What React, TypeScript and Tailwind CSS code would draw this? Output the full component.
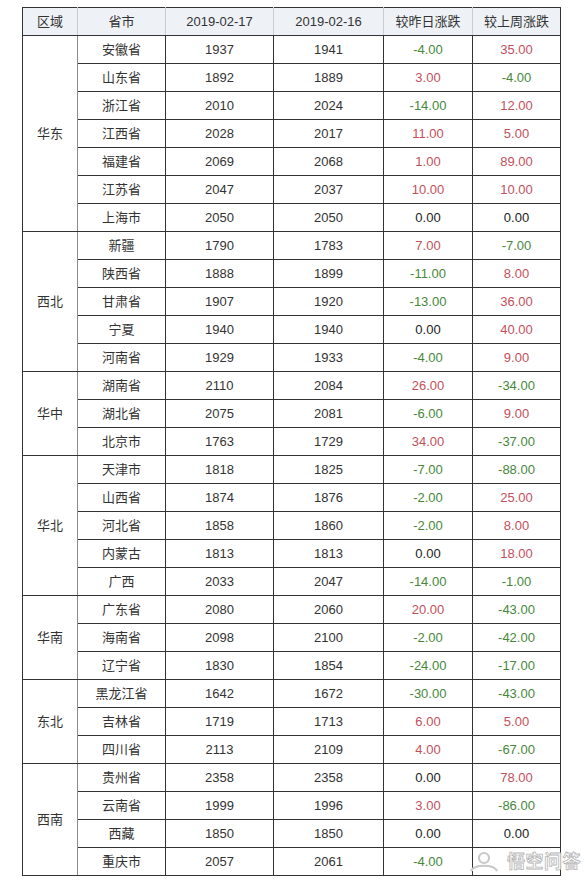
import { Fragment } from "react";

type Row = [string, string, string, string, string];

const groups: { region: string; rows: Row[] }[] = [
  {
    region: "华东",
    rows: [
      ["安徽省", "1937", "1941", "-4.00", "35.00"],
      ["山东省", "1892", "1889", "3.00", "-4.00"],
      ["浙江省", "2010", "2024", "-14.00", "12.00"],
      ["江西省", "2028", "2017", "11.00", "5.00"],
      ["福建省", "2069", "2068", "1.00", "89.00"],
      ["江苏省", "2047", "2037", "10.00", "10.00"],
      ["上海市", "2050", "2050", "0.00", "0.00"],
    ],
  },
  {
    region: "西北",
    rows: [
      ["新疆", "1790", "1783", "7.00", "-7.00"],
      ["陕西省", "1888", "1899", "-11.00", "8.00"],
      ["甘肃省", "1907", "1920", "-13.00", "36.00"],
      ["宁夏", "1940", "1940", "0.00", "40.00"],
      ["河南省", "1929", "1933", "-4.00", "9.00"],
    ],
  },
  {
    region: "华中",
    rows: [
      ["湖南省", "2110", "2084", "26.00", "-34.00"],
      ["湖北省", "2075", "2081", "-6.00", "9.00"],
      ["北京市", "1763", "1729", "34.00", "-37.00"],
    ],
  },
  {
    region: "华北",
    rows: [
      ["天津市", "1818", "1825", "-7.00", "-88.00"],
      ["山西省", "1874", "1876", "-2.00", "25.00"],
      ["河北省", "1858", "1860", "-2.00", "8.00"],
      ["内蒙古", "1813", "1813", "0.00", "18.00"],
      ["广西", "2033", "2047", "-14.00", "-1.00"],
    ],
  },
  {
    region: "华南",
    rows: [
      ["广东省", "2080", "2060", "20.00", "-43.00"],
      ["海南省", "2098", "2100", "-2.00", "-42.00"],
      ["辽宁省", "1830", "1854", "-24.00", "-17.00"],
    ],
  },
  {
    region: "东北",
    rows: [
      ["黑龙江省", "1642", "1672", "-30.00", "-43.00"],
      ["吉林省", "1719", "1713", "6.00", "5.00"],
      ["四川省", "2113", "2109", "4.00", "-67.00"],
    ],
  },
  {
    region: "西南",
    rows: [
      ["贵州省", "2358", "2358", "0.00", "78.00"],
      ["云南省", "1999", "1996", "3.00", "-86.00"],
      ["西藏", "1850", "1850", "0.00", "0.00"],
      ["重庆市", "2057", "2061", "-4.00", ""],
    ],
  },
];

// 涨红跌绿，0 保持黑色
function deltaClass(v: string) {
  if (v.startsWith("-")) return "text-[#46883a]";
  if (v === "0.00") return "text-[#222]";
  return "text-[#c4505a]";
}

const cell = "h-[28px] border border-[#333] p-0 text-center align-middle";

export default function App() {
  return (
    <div
      className="relative min-h-[884px] w-[585px] bg-white pl-[22px] pt-[7px] text-[13px] text-[#333]"
      style={{ fontFamily: '"Liberation Sans", "Noto Sans CJK SC", sans-serif' }}
    >
      <table className="table-fixed border-collapse">
        <colgroup>
          <col className="w-[55px]" />
          <col className="w-[88px]" />
          <col className="w-[108px]" />
          <col className="w-[110px]" />
          <col className="w-[89px]" />
          <col className="w-[88px]" />
        </colgroup>
        <thead>
          <tr className="bg-[#eef1f6]">
            {["区域", "省市", "2019-02-17", "2019-02-16", "较昨日涨跌"].map((h) => (
              <th key={h} className={`${cell} border-r-[#c9cdd3] font-normal`}>
                {h}
              </th>
            ))}
            <th className={`${cell} font-normal`}>较上周涨跌</th>
          </tr>
        </thead>
        <tbody>
          {groups.map((g) => (
            <Fragment key={g.region}>
              {g.rows.map((r, i) => (
                <tr key={r[0]}>
                  {i === 0 && (
                    <td rowSpan={g.rows.length} className={`${cell} border-r-[#8a8a8a]`}>
                      {g.region}
                    </td>
                  )}
                  <td className={cell}>{r[0]}</td>
                  <td className={cell}>{r[1]}</td>
                  <td className={cell}>{r[2]}</td>
                  <td className={`${cell} ${deltaClass(r[3])}`}>{r[3]}</td>
                  <td className={`${cell} ${deltaClass(r[4])}`}>{r[4]}</td>
                </tr>
              ))}
            </Fragment>
          ))}
        </tbody>
      </table>

      {/* 水印 */}
      <div className="absolute left-[467px] top-[849px] flex h-[26px] items-center gap-[6px] whitespace-nowrap">
        <svg width="34" height="22" viewBox="0 0 34 22" fill="none">
          <circle cx="17" cy="7" r="5" stroke="#c8c8c8" strokeWidth="2.2" fill="white" />
          <path d="M4 20c3-7 23-7 26 0" stroke="#c8c8c8" strokeWidth="2.2" fill="white" />
        </svg>
        <span
          className="text-[18px] font-bold leading-none tracking-[0.5px] text-white"
          style={{ WebkitTextStroke: "0.8px #b5b5b5" }}
        >
          悟空问答
        </span>
      </div>
    </div>
  );
}
